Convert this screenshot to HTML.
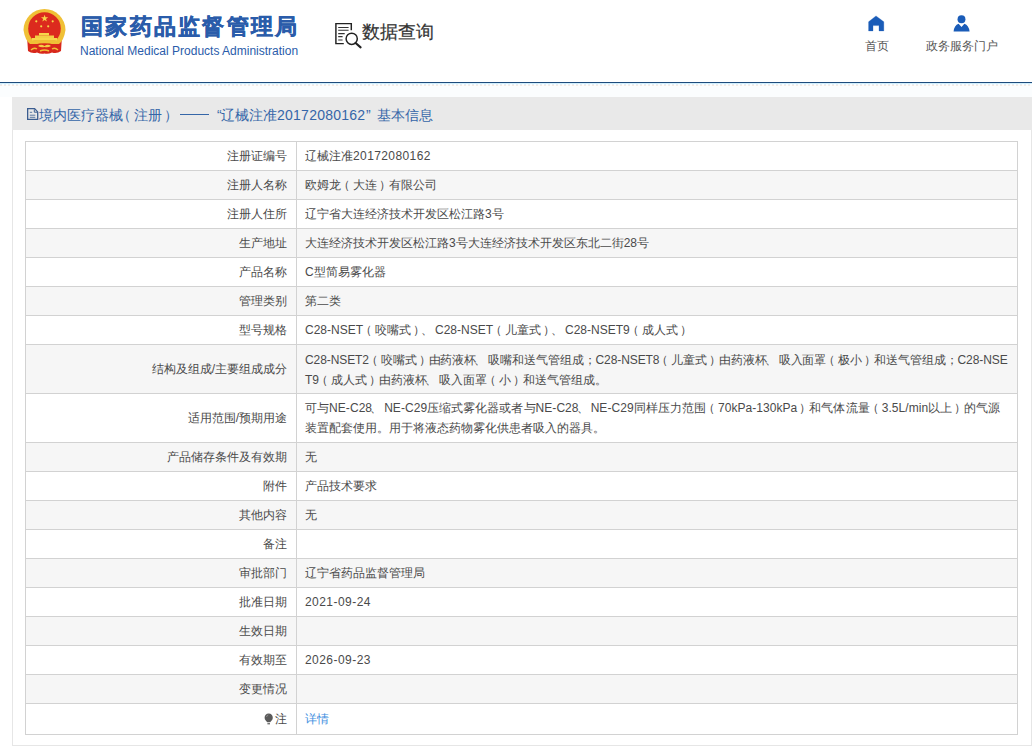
<!DOCTYPE html>
<html><head><meta charset="utf-8">
<style>
*{box-sizing:border-box;margin:0;padding:0}
html,body{width:1032px;height:751px;overflow:hidden;background:#fff;font-family:"Liberation Sans",sans-serif;color:#333}
.abs{position:absolute}
#hdr{position:absolute;left:0;top:0;width:1032px;height:82px;background:#fff}
#line1{position:absolute;left:0;top:82px;width:1032px;height:1px;background:#1d4b7c}
#line2{position:absolute;left:0;top:83px;width:1032px;height:1px;background:#d2effb}
#line3{position:absolute;left:0;top:84px;width:1032px;height:1px;background:repeating-linear-gradient(90deg,#e2eef8 0 2px,#fafdff 2px 4px)}
#line4{position:absolute;left:0;top:85px;width:1032px;height:1px;background:repeating-linear-gradient(90deg,#f5ebe3 0 2px,#fdfbf9 2px 4px)}
#tint{position:absolute;left:0;top:86px;width:1032px;height:11px;background:#fbfdfe}
.title{position:absolute;left:81px;top:13px;font-size:22px;font-weight:700;color:#2a5caa;letter-spacing:2.3px;-webkit-text-stroke:0.45px #2a5caa;white-space:nowrap;line-height:28px}
.sub{position:absolute;left:80px;top:43px;font-size:12px;color:#2a5caa;white-space:nowrap;line-height:16px}
.sj{position:absolute;left:362px;top:19px;font-size:18px;color:#333;-webkit-text-stroke:0.2px #333;white-space:nowrap;line-height:26px}
.nav{position:absolute;font-size:12px;color:#555;white-space:nowrap;line-height:16px}
#panel{position:absolute;left:12px;top:97px;width:1020px;height:649px;border:1px solid #e6e6e6;border-top:none;background:#fff}
#bar{position:absolute;left:12px;top:97px;width:1020px;height:33px;background:#e9e9e9}
#bar .t{position:absolute;top:9px;font-size:14px;color:#3566a8;white-space:nowrap;line-height:18px}
#tbl{position:absolute;left:25px;top:141px;width:993px;border:1px solid #d2d2d2;font-size:12px;color:#4a4a4a}
.r{display:flex;height:29px;border-bottom:1px solid #d2d2d2}
.r.e{background:#f6f6f6}
.r .k{width:271px;border-right:1px solid #d2d2d2;text-align:right;padding-right:9px;display:flex;align-items:center;justify-content:flex-end;white-space:nowrap}
.r .v{flex:1;padding-left:8px;display:flex;align-items:center;white-space:nowrap}
.r.two{height:49px}
.r.two .v{line-height:20px}
.r.last{height:30px;border-bottom:none}
a{color:#3d8ee0;text-decoration:none}
i{font-style:normal;position:relative}.lp{left:-3px}.rp{left:2px}.dn{left:-2px}
</style></head><body>
<div id="hdr">
  <svg class="abs" style="left:0;top:0" width="80" height="60" viewBox="0 0 80 60">
    <path d="M27 36 L28 51 Q32 54 37 52.5 Q41 54.5 44.5 53.5 Q48 54.5 52 52.5 Q57 54 61 51 L62 36 Z" fill="#d8281c"/>
    <path d="M23.5 30 A21 21 0 1 1 65.5 30 Q64 40 59 44 L30 44 Q25 40 23.5 30Z" fill="#f0c036"/>
    <circle cx="44.5" cy="28.5" r="16.3" fill="#dc2a1e"/>
    <path d="M44.6 14.8 L45.5 17.3 L48.2 17.3 L46 18.9 L46.9 21.5 L44.6 19.9 L42.3 21.5 L43.2 18.9 L41 17.3 L43.7 17.3Z" fill="#f7d64a"/>
    <circle cx="36.3" cy="21.3" r="1.1" fill="#f7d64a"/>
    <circle cx="52.7" cy="21.3" r="1.1" fill="#f7d64a"/>
    <circle cx="41.2" cy="26.3" r="1.1" fill="#f7d64a"/>
    <circle cx="48.2" cy="26.3" r="1.1" fill="#f7d64a"/>
    <rect x="39" y="33" width="10" height="2.5" fill="#f7d64a"/>
    <rect x="35" y="35.5" width="19" height="2.5" fill="#f3cf45"/>
    <rect x="32" y="38" width="25" height="2.8" fill="#f7d64a"/>
    <path d="M29 41 Q44.5 39 60 41 L58 44 Q44.5 42.5 31 44Z" fill="#f0c036"/>
    <path d="M38 46 Q41 43.5 44.5 46 Q48 43.5 51 46 Q48 48 44.5 47 Q41 48 38 46Z" fill="#f3cf45"/>
    <path d="M31 50 Q34 47 37 49 M52 49 Q55 47 58 50 M40 51 Q44.5 49 49 51" fill="none" stroke="#f0c036" stroke-width="1.4"/>
  </svg>
  <div class="title">国家药品监督管理局</div>
  <div class="sub">National Medical Products Administration</div>
  <svg class="abs" style="left:330px;top:18px" width="36" height="34" viewBox="0 0 36 34">
    <path d="M13.8 25.6 H5.9 V5.6 H21.3 V12.2" fill="none" stroke="#222" stroke-width="1.45"/>
    <path d="M8.2 9.5 H18.6 M8.2 12.2 H18.6 M8.2 15.6 H14.7 M8.2 18.6 H12.6 M8.2 22 H12.6" stroke="#333" stroke-width="1.15"/>
    <circle cx="21.7" cy="20.8" r="5.6" fill="none" stroke="#222" stroke-width="1.5"/>
    <path d="M25.6 25 L30.6 29.4" stroke="#222" stroke-width="2.1" stroke-linecap="round"/>
  </svg>
  <div class="sj">数据查询</div>
  <svg class="abs" style="left:862px;top:10px" width="30" height="26" viewBox="0 0 30 26">
    <path d="M14 5.9 L21.8 11.8 V20.9 H17 V15.6 H11 V20.9 H6.6 V11.8 Z" fill="#1a5cb8" stroke="#1a5cb8" stroke-width="0.3" stroke-linejoin="round"/>
  </svg>
  <div class="nav" style="left:865px;top:38px">首页</div>
  <svg class="abs" style="left:953px;top:15px" width="17" height="17" viewBox="0 0 17 17">
    <circle cx="8.5" cy="4.3" r="3.95" fill="#1a5cb8"/>
    <path d="M0.6 16.6 Q1.2 10.2 5.6 8.8 L8.5 12 L11.4 8.8 Q15.8 10.2 16.6 16.6Z" fill="#1a5cb8"/>
  </svg>
  <div class="nav" style="left:926px;top:38px">政务服务门户</div>
</div>
<div id="line1"></div><div id="line2"></div><div id="line3"></div><div id="line4"></div><div id="tint"></div>
<div id="panel"></div>
<div id="bar">
  <svg class="abs" style="left:15px;top:10.5px" width="12" height="13" viewBox="0 0 12 13"><path d="M0.65 0.65 H7.6 L10.7 3.9 V11.4 H0.65 Z" fill="none" stroke="#3b5d90" stroke-width="1.3" stroke-linejoin="miter"/><path d="M7.3 1.3 V4.2 H10.4" fill="none" stroke="#3b5d90" stroke-width="1"/><path d="M2.8 4.3 H5.2 M2.8 7.2 H8.3 M2.8 9.3 H8.3" stroke="#4a6a98" stroke-width="0.9"/></svg>
  <span class="t" style="left:27px">境内医疗器械</span>
  <span class="t" style="left:105px">（</span>
  <span class="t" style="left:122px">注册</span>
  <span class="t" style="left:152px">）</span>
  <div class="abs" style="left:168px;top:17px;width:29px;height:1px;background:#3566a8"></div>
  <span class="t" style="left:205px">“</span>
  <span class="t" style="left:209px">辽械注准<span style="letter-spacing:.25px">20172080162</span></span>
  <span class="t" style="left:354px">”</span>
  <span class="t" style="left:365px">基本信息</span>
</div>
<div id="tbl">
  <div class="r"><div class="k">注册证编号</div><div class="v">辽械注准<span style="letter-spacing:.4px">20172080162</span></div></div>
  <div class="r e"><div class="k">注册人名称</div><div class="v">欧姆龙<i class="lp">（</i>大连<i class="rp">）</i>有限公司</div></div>
  <div class="r"><div class="k">注册人住所</div><div class="v">辽宁省大连经济技术开发区松江路3号</div></div>
  <div class="r e"><div class="k">生产地址</div><div class="v">大连经济技术开发区松江路3号大连经济技术开发区东北二街28号</div></div>
  <div class="r"><div class="k">产品名称</div><div class="v">C型简易雾化器</div></div>
  <div class="r e"><div class="k">管理类别</div><div class="v">第二类</div></div>
  <div class="r"><div class="k">型号规格</div><div class="v">C28-NSET<i class="lp">（</i>咬嘴式<i class="rp">）</i><i class="dn">、</i>C28-NSET<i class="lp">（</i>儿童式<i class="rp">）</i><i class="dn">、</i>C28-NSET9<i class="lp">（</i>成人式<i class="rp">）</i></div></div>
  <div class="r e two"><div class="k">结构及组成/主要组成成分</div><div class="v" style="padding-top:2px"><div><span style="letter-spacing:-0.08px">C28-NSET2<i class="lp">（</i>咬嘴式<i class="rp">）</i>由药液杯<i class="dn">、</i>吸嘴和送气管组成；C28-NSET8<i class="lp">（</i>儿童式<i class="rp">）</i>由药液杯<i class="dn">、</i>吸入面罩<i class="lp">（</i>极小<i class="rp">）</i>和送气管组成；C28-NSE</span><br>T9<i class="lp">（</i>成人式<i class="rp">）</i>由药液杯<i class="dn">、</i>吸入面罩<i class="lp">（</i>小<i class="rp">）</i>和送气管组成。</div></div></div>
  <div class="r two"><div class="k">适用范围/预期用途</div><div class="v"><div><span style="letter-spacing:0.05px">可与NE-C28<i class="dn">、</i>NE-C29压缩式雾化器或者与NE-C28<i class="dn">、</i>NE-C29同样压力范围<i class="lp">（</i>70kPa-130kPa<i class="rp">）</i>和气体流量<i class="lp">（</i>3.5L/min以上<i class="rp">）</i>的气源</span><br>装置配套使用。用于将液态药物雾化供患者吸入的器具。</div></div></div>
  <div class="r e"><div class="k">产品储存条件及有效期</div><div class="v">无</div></div>
  <div class="r"><div class="k">附件</div><div class="v">产品技术要求</div></div>
  <div class="r e"><div class="k">其他内容</div><div class="v">无</div></div>
  <div class="r"><div class="k">备注</div><div class="v"></div></div>
  <div class="r e"><div class="k">审批部门</div><div class="v">辽宁省药品监督管理局</div></div>
  <div class="r"><div class="k">批准日期</div><div class="v" style="letter-spacing:.45px">2021-09-24</div></div>
  <div class="r e"><div class="k">生效日期</div><div class="v"></div></div>
  <div class="r"><div class="k">有效期至</div><div class="v" style="letter-spacing:.45px">2026-09-23</div></div>
  <div class="r e"><div class="k">变更情况</div><div class="v"></div></div>
  <div class="r last"><div class="k"><svg width="10" height="12" viewBox="0 0 10 12" style="margin-right:1px"><path d="M4.7 0.6 C7.2 0.6 8.8 2.5 8.8 4.7 C8.8 6.9 7.2 7.8 6.2 9.3 H3.2 C2.2 7.8 0.6 6.9 0.6 4.7 C0.6 2.5 2.2 0.6 4.7 0.6Z" fill="#5a5a5a"/><path d="M2.5 4 Q2.8 2.3 4.3 1.9" fill="none" stroke="#999" stroke-width="0.8"/><rect x="3.4" y="10" width="2.6" height="1.4" fill="#777"/></svg>注</div><div class="v"><a>详情</a></div></div>
</div>
</body></html>
